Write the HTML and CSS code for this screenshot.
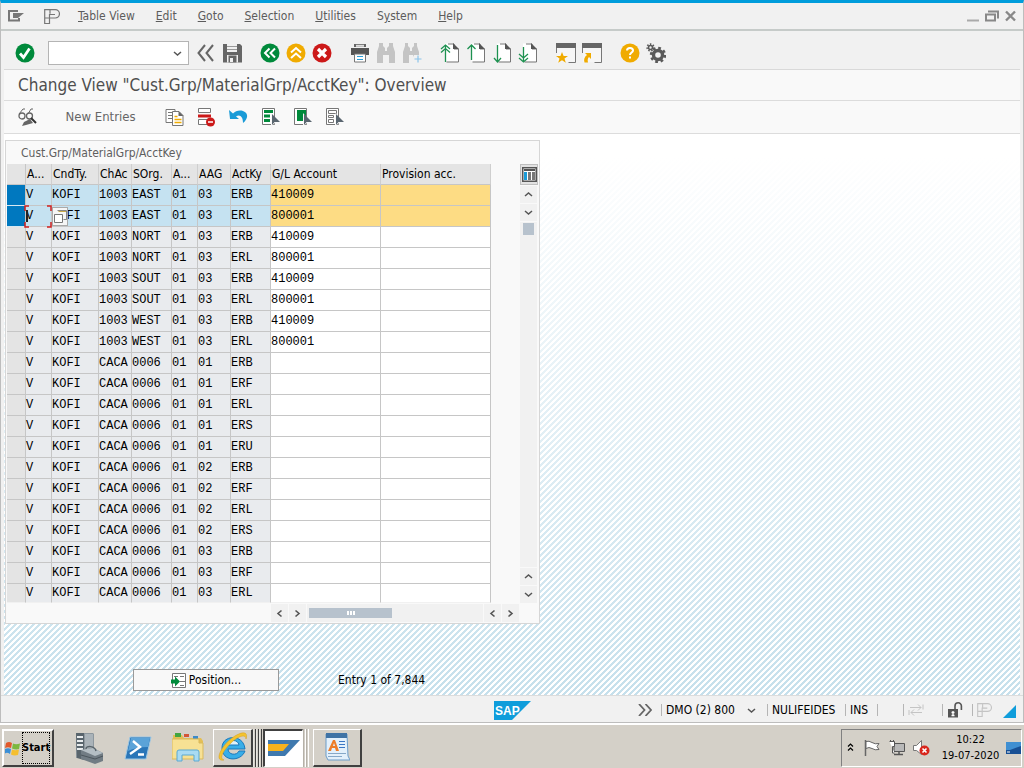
FILE: index.html
```html
<!DOCTYPE html>
<html lang="en">
<head>
<meta charset="utf-8">
<title>Change View "Cust.Grp/MaterialGrp/AcctKey": Overview</title>
<link rel="stylesheet" href="styles.css">
</head>
<body>
<svg class="defs" aria-hidden="true">
  <symbol id="page" viewBox="0 0 20 20"><path d="M5 .5h8.500l5 5v13h-13z" fill="#fff"/><path d="M8 1h6v5h4.500v13H6.500" fill="none" stroke="#777"/><path d="M13 0l6 6h-6z" fill="#555"/></symbol>
  <symbol id="pointer" viewBox="0 0 8 12"><path d="M0 0v11l2.500-3H8z" fill="#5a6670"/></symbol>
  <symbol id="chev-up" viewBox="0 0 9 9"><path d="M1 6l3.500-3L8 6" fill="none" stroke="#555" stroke-width="1.500"/></symbol>
  <symbol id="chev-down" viewBox="0 0 9 9"><path d="M1 3l3.500 3L8 3" fill="none" stroke="#555" stroke-width="1.500"/></symbol>
  <symbol id="chev-left" viewBox="0 0 9 9"><path d="M6.500 1.500l-3.500 3 3.500 3" fill="none" stroke="#555" stroke-width="1.600"/></symbol>
  <symbol id="chev-right" viewBox="0 0 9 9"><path d="M2.500 1.500l3.500 3-3.500 3" fill="none" stroke="#555" stroke-width="1.600"/></symbol>
  <symbol id="pmark" viewBox="0 0 16 15"><path d="M5.500 9v5.500H.7V.7h10.600a4 4 0 010 8.300H.7M5.500 9V5.500H11M6 .7v4" fill="none" stroke="currentColor" stroke-width="1.200"/></symbol>
</svg>
<div class="screen">
  <div class="window">
    <header class="menubar">
      <button class="plain sysmenu" aria-label="System menu"><svg width="16" height="12" viewBox="0 0 16 12"><path d="M10 1H1v9.500h10V8" fill="none" stroke="#777" stroke-width="2"/><path d="M5 3h11l-6 5H5z" fill="#777"/></svg></button>
      <button class="plain pmenu" aria-label="Personalize"><svg width="16" height="15"><use href="#pmark"/></svg></button>
      <nav class="menus">
        <a href="#"><u>T</u>able View</a><a href="#"><u>E</u>dit</a><a href="#"><u>G</u>oto</a><a href="#"><u>S</u>election</a><a href="#"><u>U</u>tilities</a><a href="#">S<u>y</u>stem</a><a href="#"><u>H</u>elp</a>
      </nav>
      <div class="winbuttons">
        <button class="plain" aria-label="Minimize"><svg width="12" height="12"><path d="M0 10.500h12" stroke="#aaa" stroke-width="2"/></svg></button>
        <button class="plain" aria-label="Restore"><svg width="14" height="12"><path d="M1 4.500h9v6H1zM3 1.500h10v7" fill="none" stroke="#888" stroke-width="2"/></svg></button>
        <button class="plain" aria-label="Close"><svg width="11" height="12"><path d="M1 1.500l9 9M10 1.500l-9 9" stroke="#888" stroke-width="2.400"/></svg></button>
      </div>
    </header>

    <div class="toolbar">
      <button class="tool" aria-label="Enter"><svg width="20" height="20"><circle cx="10" cy="10" r="9.500" fill="#008a3b"/><path d="M5 10.500l3.500 4L14.500 5.500" fill="none" stroke="#fff" stroke-width="2.800"/></svg></button>
      <div class="command"><input type="text" aria-label="Command field"><svg width="9" height="9"><use href="#chev-down"/></svg></div>
      <div class="group">
        <button class="tool" aria-label="Hide command field"><svg width="18" height="18"><path d="M8 1L1.500 9 8 17M16 1L9.500 9l6.500 8" fill="none" stroke="#666" stroke-width="2"/></svg></button>
        <button class="tool" aria-label="Save"><svg width="19" height="20"><path d="M0 1h17l2 2v16.500H0z" fill="#666"/><path d="M4 1h10v8H4zM4 12h11v7.500H4z" fill="#f0f0f0"/><path d="M4 3.500h10M4 6.500h10" stroke="#999"/><path d="M5.500 12.500h8v7h-8z" fill="#666"/><path d="M7 15h3v4H7z" fill="#f0f0f0"/></svg></button>
      </div>
      <div class="group">
        <button class="tool" aria-label="Back"><svg width="20" height="20"><circle cx="10" cy="10" r="9.500" fill="#008a3b"/><path d="M9.500 5.500L5 10l4.500 4.500M15 5.500L10.500 10l4.500 4.500" fill="none" stroke="#fff" stroke-width="2"/></svg></button>
        <button class="tool" aria-label="Exit"><svg width="20" height="20"><circle cx="10" cy="10" r="9.500" fill="#f0ab00"/><path d="M5 9.500L10 5l5 4.500M5 15l5-4.500 5 4.500" fill="none" stroke="#fff" stroke-width="2"/></svg></button>
        <button class="tool" aria-label="Cancel"><svg width="20" height="20"><circle cx="10" cy="10" r="9.500" fill="#cc1919"/><path d="M6 6l8 8M14 6l-8 8" stroke="#fff" stroke-width="3.200"/></svg></button>
      </div>
      <div class="group">
        <button class="tool" aria-label="Print"><svg width="20" height="20"><path d="M4 1h12v3H4z" fill="#666"/><path d="M6 1.800h8v2H6z" fill="#ddd"/><path d="M1 5h18v7h-3v-1H4v1H1z" fill="#555"/><path d="M4.500 11h11v8h-11z" fill="#fff" stroke="#777"/><path d="M7 13.500h6M7 16.500h6" stroke="#2a9fd8"/></svg></button>
        <button class="tool" aria-label="Find"><svg width="20" height="20"><path d="M3 0h4v3l2 2v3h2V5l2-2V0h4v3l2 6v11h-6v-8H7v8H1V9l2-6z" fill="#c4c4c4"/></svg></button>
        <button class="tool" aria-label="Find next"><svg width="20" height="20"><path d="M3 0h3v3l2 2v3h2V5l2-2V0h3v3l2 6v3h-5l-1 2v-2H7v8H1V9l2-6z" fill="#c4c4c4"/><path d="M16 12.500v7M12.500 16h7" stroke="#8bc4ea" stroke-width="1.200"/></svg></button>
      </div>
      <div class="group">
        <button class="tool" aria-label="First page"><svg width="20" height="20"><use href="#page" width="20" height="20"/><path d="M5.500 19V2M1 6l4.500-4L10 6M1 9.500l4.500-4 4.500 4" fill="none" stroke="#1d9150" stroke-width="1.300"/></svg></button>
        <button class="tool" aria-label="Previous page"><svg width="20" height="20"><use href="#page" width="20" height="20"/><path d="M5.500 17V2M1.500 6l4-4 4 4" fill="none" stroke="#1d9150" stroke-width="1.300"/></svg></button>
        <button class="tool" aria-label="Next page"><svg width="20" height="20"><use href="#page" width="20" height="20"/><path d="M5.500 2v17M2 15l3.500 4L9 15" fill="none" stroke="#1d9150" stroke-width="1.300"/></svg></button>
        <button class="tool" aria-label="Last page"><svg width="20" height="20"><use href="#page" width="20" height="20"/><path d="M5.500 4v15M1 11l4.500 4L10 11M1 15l4.500 4 4.500-4" fill="none" stroke="#1d9150" stroke-width="1.300"/></svg></button>
      </div>
      <div class="group">
        <button class="tool" aria-label="New session"><svg width="20" height="20"><path d="M1 4h18v15H1z" fill="#f6f6f6"/><path d="M.500 10V4M19.500 4v15.500h-7" fill="none" stroke="#777"/><path d="M0 0h20v5H0z" fill="#666"/><path d="M6 9l1.600 4H12l-3.500 2.600 1.300 4.100L6 17.200l-3.800 2.500 1.300-4.100L0 13h4.400z" fill="#f0ab00"/></svg></button>
        <button class="tool" aria-label="Create shortcut"><svg width="20" height="20"><path d="M1 4h18v15H1z" fill="#f6f6f6"/><path d="M.500 10V4M19.500 4v15.500h-7" fill="none" stroke="#777"/><path d="M0 0h20v5H0z" fill="#666"/><path d="M9 10v6l-2-2q-2 2-1 5.500H2.500Q1 15 5 12L3 10z" fill="#f0ab00"/></svg></button>
      </div>
      <div class="group">
        <button class="tool" aria-label="Help"><svg width="20" height="20"><circle cx="10" cy="10" r="9.500" fill="#f0ab00"/><path d="M7 7.500C7 4 13 4 13 7.500c0 2-3 2-3 4.500M10 13.500v2" fill="none" stroke="#fff" stroke-width="2"/></svg></button>
        <button class="tool" aria-label="Customize local layout"><svg width="20" height="20"><circle cx="12" cy="12" r="4.500" fill="none" stroke="#5a5a5a" stroke-width="3.400"/><circle cx="12" cy="12" r="6.800" fill="none" stroke="#5a5a5a" stroke-width="2.800" stroke-dasharray="2.670 2.670"/><circle cx="4.500" cy="4.500" r="2" fill="none" stroke="#5a5a5a" stroke-width="1.600"/><circle cx="4.500" cy="4.500" r="3.400" fill="none" stroke="#5a5a5a" stroke-width="1.600" stroke-dasharray="1.500 1.500"/></svg></button>
      </div>
    </div>

    <h1 class="title">Change View "Cust.Grp/MaterialGrp/AcctKey": Overview</h1>

    <div class="appbar">
      <button class="tool glasses" aria-label="Display/Change"><svg width="20" height="20"><path d="M1 7l4-5M10 7l3-5M5 2h2M13 2h2" fill="none" stroke="#666"/><circle cx="4" cy="9" r="3" fill="none" stroke="#666" stroke-width="1.300"/><circle cx="11.500" cy="9" r="3" fill="none" stroke="#666" stroke-width="1.300"/><path d="M4 19l2-4 6-3 3 4-7 2z" fill="#666"/><path d="M13 11l5 5" stroke="#333" stroke-width="2"/></svg></button>
      <button class="plain newentries">New Entries</button>
      <button class="tool wide" aria-label="Copy as"><svg width="19" height="20"><path d="M1 2.500h9v13H1z" fill="#fff" stroke="#777"/><path d="M3 5.500h5M3 8.500h4M3 11.500h4" stroke="#777"/><path d="M7.500 4.500h6.500l4 4v10H7.500z" fill="#fff" stroke="#777"/><path d="M13.500 4l5 5h-5z" fill="#666"/><path d="M9.500 9.500h3M9.500 12.500h7M9.500 15.500h7" stroke="#f0ab00" stroke-width="1.500"/></svg></button>
      <button class="tool wide" aria-label="Delete"><svg width="19" height="20"><path d="M1.500 1.500h12v4h-12zM10 17.500H1.500v-5H10" fill="#fff" stroke="#777"/><path d="M1 7.500h13v3H1z" fill="#cc1919"/><circle cx="13.500" cy="15" r="4.500" fill="#cc1919"/><path d="M11 15h5" stroke="#fff" stroke-width="1.500"/></svg></button>
      <button class="tool wide" aria-label="Undo change"><svg width="19" height="20"><path d="M0 3l1 9h9L7 9.500c4-2.500 7 .5 7 6.500 5-4 6-10 0-12C10 3 6.500 4 4 6.500z" fill="#1a9bd7"/></svg></button>
      <button class="tool wide" aria-label="Select all"><svg width="19" height="20"><path d="M1.500 1.500h12v16h-12z" fill="#fff" stroke="#777"/><path d="M3 3h9v3H3zM3 7.500h6v3H3zM3 12h6v3H3z" fill="#008a3b"/><path d="M10 6l8 10h-4l-4 3z" fill="#f9f9f9"/><use href="#pointer" x="11" y="7" width="8" height="12"/></svg></button>
      <button class="tool wide" aria-label="Select block"><svg width="19" height="20"><path d="M1.500 1.500h12v16h-12z" fill="#fff" stroke="#777"/><path d="M4 3h9v11H4z" fill="#008a3b"/><path d="M10 6l8 10h-4l-4 3z" fill="#f9f9f9"/><use href="#pointer" x="11" y="7" width="8" height="12"/></svg></button>
      <button class="tool wide" aria-label="Deselect all"><svg width="19" height="20"><path d="M1.500 1.500h12v16h-12z" fill="#fff" stroke="#777"/><path d="M3.500 3.500h8v3h-8zM3.500 8.500h5v2h-5zM3.500 12.500h5v3h-5z" fill="none" stroke="#777"/><path d="M10 6l8 10h-4l-4 3z" fill="#f9f9f9"/><use href="#pointer" x="11" y="7" width="8" height="12"/></svg></button>
    </div>

    <main class="canvas">
      <section class="panel">
        <h2 class="panel-title">Cust.Grp/MaterialGrp/AcctKey</h2>
        <div class="panel-body">
          <table class="grid">
            <colgroup><col class="w19"><col class="w26"><col class="w47"><col class="w33"><col class="w40"><col class="w26"><col class="w33"><col class="w40"><col class="w110"><col class="w110"></colgroup>
            <thead><tr><th></th><th>A...</th><th>CndTy.</th><th>ChAc</th><th>SOrg.</th><th>A...</th><th>AAG</th><th>ActKy</th><th>G/L Account</th><th>Provision acc.</th></tr></thead>
            <tbody id="rows"></tbody>
          </table>
          <div class="vscroll">
            <button class="config" aria-label="Table settings"><svg width="15" height="15"><path d="M.750.750h13.500v13.500H.750z" fill="#fff" stroke="#555" stroke-width="1.500"/><path d="M2 2h11v2H2z" fill="#555"/><path d="M2 5h3v8H2z" fill="#1a9bd7"/><path d="M6 5h3v8H6zM10 5h3v8h-3z" fill="#777"/></svg></button>
            <button class="arrow" aria-label="Scroll up"><svg width="9" height="9"><use href="#chev-up"/></svg></button>
            <button class="arrow" aria-label="Scroll down"><svg width="9" height="9"><use href="#chev-down"/></svg></button>
            <div class="vtrack"><div class="vthumb"></div></div>
            <button class="arrow" aria-label="Page up"><svg width="9" height="9"><use href="#chev-up"/></svg></button>
            <button class="arrow" aria-label="Page down"><svg width="9" height="9"><use href="#chev-down"/></svg></button>
          </div>
        </div>
        <div class="hscroll">
          <button class="arrow" aria-label="Scroll left"><svg width="9" height="9"><use href="#chev-left"/></svg></button>
          <button class="arrow" aria-label="Scroll right"><svg width="9" height="9"><use href="#chev-right"/></svg></button>
          <div class="htrack"><div class="hthumb"><i></i><i></i><i></i></div></div>
          <button class="arrow" aria-label="Page left"><svg width="9" height="9"><use href="#chev-left"/></svg></button>
          <button class="arrow" aria-label="Page right"><svg width="9" height="9"><use href="#chev-right"/></svg></button>
        </div>
      </section>
      <div class="footer-row">
        <button class="position"><svg width="15" height="15"><path d="M1.500.500h13v14h-13z" fill="#fff" stroke="#777"/><path d="M3 3.500h4M9 3.500h4M9 8.500h5M9 12.500h4" stroke="#777"/><path d="M0 6.500h4v-3l5 5-5 5v-3H0z" fill="#008a3b"/></svg>Position...</button>
        <span>Entry 1 of 7,844</span>
      </div>
    </main>

    <footer class="status">
      <svg class="saplogo" width="37" height="19" role="img" aria-label="SAP"><path d="M0 0h37L18 19H0z" fill="#0f9ddb"/><text x="1" y="14" class="logotext">SAP</text></svg>
      <div class="status-right">
        <svg class="expand" width="14" height="12"><path d="M1 0l5.500 6L1 12M7.500 0L13 6l-5.500 6" fill="none" stroke="#666" stroke-width="1.800"/></svg>
        <span class="cell sys">DMO (2) 800 <svg width="9" height="9"><use href="#chev-down"/></svg></span>
        <span class="cell server">NULIFEIDES</span>
        <span class="cell ins">INS</span>
        <span class="cell blank"></span>
        <span class="cell swap"><svg width="16" height="12"><path d="M2 3.500h11M10 .500l3 3-3 3M14 8.500H3M6 5.500l-3 3 3 3M15 .500v5M1 6v5" fill="none" stroke="#c4c4c4"/></svg></span>
        <span class="cell lock"><svg width="16" height="16"><path d="M8 7V4a3.200 3.200 0 016.400 0v4" fill="none" stroke="#555" stroke-width="1.600"/><path d="M1 7h10v8.500H1z" fill="#555"/><path d="M6 9v5M4.500 10.500h3M4.500 13.500h3" stroke="#fff" stroke-width="1.300"/></svg></span>
        <span class="cell pm"><svg width="15" height="14"><use href="#pmark"/></svg></span>
        <svg class="grip" width="13" height="13"><path d="M13 0v13H0z" fill="#0f9ddb"/></svg>
      </div>
    </footer>
  </div>

  <div class="taskbar">
    <button class="start"><svg width="16" height="16"><path d="M1 3q3-2 6 0L6 8Q3 6.500 0 8z" fill="#e2592b"/><path d="M8 3.500q3 1.500 7 0L14 9q-3 1-7-.5z" fill="#7cb83e"/><path d="M0 9q3-1.500 6 0l-1 5q-3-2-5-.5z" fill="#3b8fd6"/><path d="M7 9.500q3 1.500 7 0L13 15q-4 1-7-.5z" fill="#f5bf2e"/></svg><span>Start</span></button>
    <div class="quick">
      <button class="plain" aria-label="Server Manager"><svg width="32" height="34" viewBox="0 0 32 34"><path d="M4 2h17l1 1v24H4z" fill="#8d979e"/><path d="M4 2h8v27l-7-2z" fill="#59656d"/><path d="M5 6h6M5 10h6M5 14h6M5 18h6" stroke="#e8ecee" stroke-width="2"/><path d="M13 3h8v15h-8z" fill="#aab3b9"/><path d="M9 19l12-2 10 5v8l-8 3-14-5z" fill="#717c84"/><path d="M9 19l12-2 10 5-8 3z" fill="#b4bec4"/><path d="M14 18c0-4 9-3 10 2" fill="none" stroke="#58636a" stroke-width="1.500"/><path d="M9 24l14 4 8-3" stroke="#4c565d" fill="none"/></svg></button>
      <button class="plain" aria-label="PowerShell"><svg width="28" height="24" viewBox="0 0 28 24"><path d="M6 1h21l-5 22H1z" fill="#2a76b8" stroke="#9cc7e4"/><path d="M7 2h19l-2 9Q12 11 4 15z" fill="#5ba3d8"/><path d="M9 5l7 6-10 7M14 18.500h6" fill="none" stroke="#fff" stroke-width="2.400"/></svg></button>
      <button class="plain" aria-label="Explorer"><svg width="32" height="32" viewBox="0 0 32 32"><path d="M1 3h9l2 3h17l2 3v17H1z" fill="#e4bf55"/><path d="M3 1h6v4H3z" fill="#42a541"/><path d="M12 2h5v3h-5z" fill="#d35637"/><path d="M21 4h5v3h-5z" fill="#3c8ac8"/><path d="M0 7h27v4h4v16H0z" fill="#f7e194" stroke="#d9b95c"/><path d="M5 29v-9q0-2 2-2h18q2 0 2 2v9h-5v-6H10v6z" fill="#a9dbf3" stroke="#5aa9d2"/></svg></button>
    </div>
    <div class="stack">
      <button class="task" aria-label="Internet Explorer"><svg width="32" height="32" viewBox="0 0 32 32"><path d="M28 18H11c0 6 9 7 11 2h6C24 31 5 31 5 17S27 3 28 18z" fill="#38aee8" stroke="#1a78bb"/><path d="M11 14h11c-1-6-10-6-11 0z" fill="#dff2fb" stroke="#1a78bb"/><path d="M7 29C-4 31 5 14 15 7 23 1 32-1 29 8c0-6-9-2-15 4S1 27 7 29z" fill="#f3c32f" stroke="#d69c18" stroke-width=".500"/></svg></button>
      <i class="edge"></i><i class="edge"></i><i class="edge"></i>
    </div>
    <div class="stack">
      <button class="task active" aria-label="SAP Logon"><svg width="32" height="16"><path d="M0 0h32L17 16H0z" fill="#3f79ae"/><path d="M0 4h21l-6 7H0z" fill="#f7b21c"/></svg></button>
      <i class="edge light"></i><i class="edge light"></i>
    </div>
    <button class="task last" aria-label="WordPad"><svg width="26" height="28" viewBox="0 0 26 28"><path d="M2 1h21l1 22 2 4H4l-2-4z" fill="#e3f0fb" stroke="#6d9dc9"/><path d="M2 0h21v5H2z" fill="#3f73a5"/><path d="M4 18L9 7h2l4 11h-3l-1-3H8l-1 3zM9 13h2l-1-3z" fill="#ee7d28" fill-rule="evenodd"/><path d="M15 8.500h6M15 11.500h6M15 14.500h6" stroke="#3a76c4"/><path d="M4 20.500h18M4 23.500h14" stroke="#86a8c8"/></svg></button>
    <div class="tray">
      <svg width="7" height="9"><path d="M1 3.500L3.500 1 6 3.500M1 7.500L3.500 5 6 7.500" fill="none" stroke="#000" stroke-width="1.200"/></svg>
      <svg class="flag" width="16" height="16"><path d="M1.500 0v16" stroke="#666" stroke-width="1.500"/><path d="M2 1.500q3-1 6 1t7 1l-2 3 2 3q-4 1-7-1T2 8.500z" fill="#fff" stroke="#666"/></svg>
      <svg class="net" width="16" height="16"><path d="M5 3.500h10.500v8H5z" fill="#b8b8b8" stroke="#555"/><path d="M5 14.500h9M10 12v2" stroke="#555" stroke-width="1.500"/><path d="M.500 1.500h5v5h-2V13h2" fill="#fff" stroke="#555"/><path d="M1.500 0v2M4.500 0v2" stroke="#555"/></svg>
      <svg class="vol" width="17" height="16"><path d="M.500 5.500h3l5-5v14l-5-4h-3z" fill="#fff" stroke="#777"/><circle cx="11.500" cy="10.500" r="5" fill="#d9261c"/><path d="M9.500 8.500l4 4M13.500 8.500l-4 4" stroke="#fff" stroke-width="1.600"/></svg>
      <div class="clock"><time>10:22</time><time>19-07-2020</time></div>
      <svg width="15" height="12"><path d="M0 0h15v12H0z" fill="#174f94"/><path d="M0 0h15v4L4 8H0z" fill="#3f8fd2"/><path d="M1 10h3" stroke="#fff"/></svg>
    </div>
  </div>
</div>
<script src="app.js"></script>
</body>
</html>
```

FILE: styles.css
```css
* { box-sizing: border-box; }
body {
  margin: 0;
  font: 12px/16px "DejaVu Sans Condensed", "Noto Sans", sans-serif;
  color: #000;
  overflow: hidden;
}
svg { display: block; flex: none; }
.defs { position: absolute; width: 0; height: 0; }
button { font: inherit; color: inherit; }
.plain, .tool, .arrow { border: 0; padding: 0; background: none; display: flex; align-items: center; justify-content: center; }
.screen { display: flex; flex-direction: column; height: 100vh; background: #d4d0c8; }

.window {
  flex: 1;
  display: flex;
  flex-direction: column;
  min-height: 0;
  background: #f1f1f1;
  border: solid #bdbdbd;
  border-width: 0 1px 1px;
  border-top: 3px solid #009ddc;
}

/* menu bar */
.menubar { display: flex; align-items: center; height: 28px; border-bottom: 2px solid #c6cbc9; padding: 0 7px; color: #5c5c5c; }
.menubar > .sysmenu { width: 16px; }
.pmenu { margin-left: 20px; color: #777; }
.menus { display: flex; gap: 21px; margin-left: 18px; flex: 1; }
.menus a { color: inherit; text-decoration: none; }
.winbuttons { display: flex; gap: 6px; }

/* tool bars */
.toolbar { display: flex; align-items: center; height: 39px; margin: 0 3px; padding: 6px 8px 0; border-bottom: 1px solid #d9d9d9; }
.tool { width: 26px; height: 26px; flex: none; }
.group { display: flex; margin-right: 12px; }
.command { display: flex; align-items: center; width: 141px; height: 24px; margin: 0 4px 0 10px; padding-right: 6px; background: #fff; border: 1px solid #b4b4b4; }
.command input { flex: 1; min-width: 0; border: 0; outline: 0; background: none; font: inherit; }
.title { margin: 0 3px; height: 31px; padding: 0 14px; font-size: 17px; line-height: 31px; font-weight: 400; color: #4f4f4f; background: #f9f9f9; border-bottom: 1px solid #dcdcdc; }
.appbar { display: flex; align-items: center; height: 33px; margin: 0 3px; padding: 0 11px; background: #f9f9f9; border-bottom: 1px solid #dcdcdc; }
.newentries { width: 71px; margin: 0 22px 0 24px; color: #666; white-space: nowrap; font-size: 13px; }
.wide { width: 32px; }

/* work area */
.canvas {
  flex: 1;
  min-height: 0;
  margin: 0 3px;
  padding: 6px 1px 0;
  background:
    linear-gradient(#fff 4%, rgba(255, 255, 255, 0)),
    linear-gradient(135deg, #fff 25%, #c6e0ec 25% 50%, #fff 50% 75%, #c6e0ec 75%) 0 0 / 6px 6px;
}
.panel { width: max-content; background: #f9f9f9; border: 1px solid #d6d6d6; padding: 1px 1px 0; }
.panel-title { margin: 0; padding-left: 14px; height: 22px; font-size: 12px; line-height: 22px; font-weight: 400; color: #5f5f5f; }
.panel-body { display: flex; gap: 29px; }

.grid { table-layout: fixed; width: 484px; border-collapse: separate; border-spacing: 0; }
.w19 { width: 19px; }
.w26 { width: 26px; }
.w33 { width: 33px; }
.w40 { width: 40px; }
.w47 { width: 47px; }
.w110 { width: 110px; }
.grid th, .grid td { height: 21px; padding: 0; border: solid #c6c6c6; border-width: 0 1px 1px 0; line-height: 20px; white-space: nowrap; text-align: left; font-weight: 400; }
.grid th { padding-left: 1px; background: #e4e4e4; }
.grid th + th { border-right-color: #cfcfcf; }
.grid td { position: relative; background: #e9ebee; font-family: "Liberation Mono", monospace; }
.grid td:first-child { background: #e4e4e4; }
.grid td.edit { background: #fff; }
.grid td input { display: block; width: 100%; height: 20px; padding: 0; border: 0; outline: 0; background: none; font: inherit; }
.grid .selected td { background: #c5e2f1; }
.grid .selected td:first-child { background: #0078bf; border-bottom-color: #d7e8f2; }
.grid .selected td.edit { background: #fddc84; }
.grid tr:last-child td { height: 19px; line-height: 18px; border-bottom-color: #f1f1f1; }
.grid thead tr:last-child th { height: 21px; }
.grid tr:last-child td input { height: 18px; }
.focus { position: absolute; left: -2px; top: -1px; width: 28px; height: 23px; z-index: 1; }
.f4 { position: absolute; left: 0; top: 1px; width: 16px; height: 19px; padding: 0; display: grid; place-items: center; background: #f6f6f6; border: 1px solid #aaa; }

.vscroll { display: flex; flex-direction: column; gap: 1px; width: 18px; }
.vscroll .arrow { width: 17px; height: 17px; background: #f1f1f1; }
.config { width: 18px; height: 21px; padding: 0; display: grid; place-items: center; background: #e2e2e2; border: 1px solid #bfbfbf; }
.vtrack { flex: 1; width: 17px; background: #f1f1f1; padding: 1px 3px; }
.vthumb { height: 12px; background: #b7c2cd; }
.hscroll { display: flex; gap: 1px; height: 20px; padding: 1px 19px 1px 264px; }
.hscroll .arrow { width: 17px; background: #f1f1f1; }
.htrack { flex: 1; background: #f1f1f1; padding: 4px 2px; }
.hthumb { display: flex; gap: 1px; align-items: center; justify-content: center; width: 83px; height: 10px; background: #b7c2cd; }
.hthumb i { width: 2px; height: 4px; background: #fff; }

.footer-row { display: flex; align-items: center; gap: 59px; margin: 45px 0 0 128px; }
.position { display: flex; align-items: center; justify-content: center; gap: 3px; width: 146px; height: 22px; padding: 0; background: #f8f8f8; border: 1px solid #9a9a9a; }

/* status bar */
.status { display: grid; grid-template-columns: 1fr auto 1fr; align-items: center; height: 27px; padding: 2px 7px 0; border-top: 1px solid #dcdcdc; }
.saplogo { grid-column: 2; }
.logotext { font: bold 12px "Liberation Sans", sans-serif; fill: #fff; }
.status-right { display: flex; align-items: center; justify-content: flex-end; }
.cell { display: flex; align-items: center; gap: 12px; height: 16px; padding-left: 4px; white-space: nowrap; }
.cell::before { content: ""; width: 1px; height: 12px; margin: 0 -8px 0 -4px; background: #b5b5b5; }
.expand { margin-right: 9px; }
.sys { width: 106px; }
.server { width: 78px; }
.ins { width: 32px; }
.blank { width: 26px; }
.swap { width: 39px; }
.lock { width: 30px; }
.pm { width: 23px; color: #c4c4c4; }
.grip { margin-left: 8px; align-self: end; }

/* task bar */
.taskbar { display: flex; align-items: center; height: 45px; padding: 3px 2px 1px; border-top: 2px solid #fff; }
.start { display: flex; align-items: center; gap: 1px; width: 52px; height: 38px; padding: 0 1px; font: bold 11px/16px "DejaVu Sans Condensed", sans-serif; background: #d4d0c8; border: 2px solid; border-color: #fff #404040 #404040 #fff; }
.start span { height: 32px; line-height: 32px; outline: 1px dotted #000; outline-offset: -1px; }
.quick { display: flex; align-items: center; margin-left: 9px; }
.quick button { width: 50px; height: 38px; }
.stack { display: flex; }
.task { width: 40px; height: 38px; padding: 0; display: grid; place-items: center; background: #d4d0c8; border: 1px solid; border-color: #fff #404040 #404040 #fff; border-right-width: 2px; border-bottom-width: 2px; }
.edge { width: 3px; height: 38px; border-right: 1px solid #404040; border-left: 1px solid #e8e6e1; }
.active { background: #fff; border-color: #404040 #fff #fff #404040; border-width: 2px 1px 1px 2px; margin-left: 1px; }
.edge.light { border-right-color: #fff; border-left-color: #b5b1a9; }
.last { width: 49px; margin-left: 4px; }
.tray { display: flex; align-items: center; margin-left: auto; height: 38px; padding: 0 0 0 5px; border: 1px solid; border-color: #808080 #fff #fff #808080; }
.flag { margin-left: 10px; }
.net { margin-left: 9px; }
.vol { margin-left: 8px; }
.clock { display: flex; flex-direction: column; align-items: center; width: 57px; margin: 0 7px 0 12px; font-size: 11px; white-space: nowrap; }
```

FILE: app.js
```js
const rows = [
  ["KOFI", "1003", "EAST", "01", "03", "ERB", "410009"],
  ["KOFI", "1003", "EAST", "01", "03", "ERL", "800001"],
  ["KOFI", "1003", "NORT", "01", "03", "ERB", "410009"],
  ["KOFI", "1003", "NORT", "01", "03", "ERL", "800001"],
  ["KOFI", "1003", "SOUT", "01", "03", "ERB", "410009"],
  ["KOFI", "1003", "SOUT", "01", "03", "ERL", "800001"],
  ["KOFI", "1003", "WEST", "01", "03", "ERB", "410009"],
  ["KOFI", "1003", "WEST", "01", "03", "ERL", "800001"],
  ...["01 ERB", "01 ERF", "01 ERL", "01 ERS", "01 ERU", "02 ERB", "02 ERF", "02 ERL", "02 ERS", "03 ERB", "03 ERF", "03 ERL"]
    .map((pair) => ["KOFI", "CACA", "0006", "01", ...pair.split(" "), ""]),
];

const focusFrame = '<svg class="focus" width="28" height="23"><path d="M5 1H1v5M23 1h4v5M5 22H1v-5M23 22h4v-5" fill="none" stroke="#d02020" stroke-width="1.500"/><path d="M3 5v12" stroke="#222" stroke-width="2"/></svg>';
const helpButton = '<button class="f4" aria-label="Input help"><svg width="13" height="13"><path d="M4.500 1.500h8v8" fill="none" stroke="#c9a94a"/><path d="M3.500.500h9v9h-3" fill="none" stroke="#888"/><path d="M.500 4.500h8v8h-8z" fill="#fff" stroke="#777"/></svg></button>';

document.getElementById("rows").innerHTML = rows.map((row, i) => {
  const keys = row.slice(0, 6).map((value, k) => `<td>${value}${i === 1 && k === 0 ? helpButton : ""}</td>`).join("");
  return `<tr${i < 2 ? ' class="selected"' : ""}><td></td><td>V${i === 1 ? focusFrame : ""}</td>${keys}` +
    `<td class="edit"><input aria-label="G/L Account, row ${i + 1}" value="${row[6]}"></td>` +
    `<td class="edit"><input aria-label="Provision account, row ${i + 1}"></td></tr>`;
}).join("");
```
